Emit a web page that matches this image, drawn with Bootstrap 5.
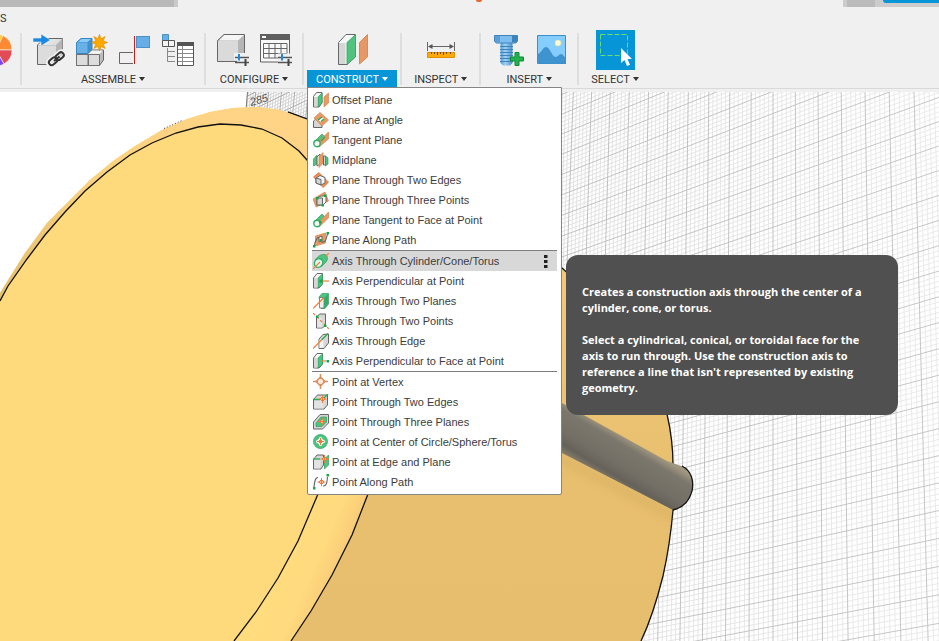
<!DOCTYPE html>
<html lang="en">
<head>
<meta charset="utf-8">
<meta name="viewport" content="width=device-width, initial-scale=1">
<title>Construct menu</title>
<link href="https://cdn.jsdelivr.net/npm/bootstrap@5.3.0/dist/css/bootstrap.min.css" rel="stylesheet">
<style>
body { font-family: Roboto, "Liberation Sans", sans-serif; font-size: 11px; color: #333; background: #fff; }
.app-head { background: #f0f0f0; padding-bottom: 3px; }
.strip { height: 7px; }
.strip-doc { width: 178px; background: #b9b9b9; border-right: 4px solid #cacaca; }
.strip-end { width: 96px; background: #ccc; }
.strip-end .tabbit { width: 28px; height: 7px; margin-left: 4px; background: #bbb; }
.strip-end .bluebit { height: 3px; margin-left: 8px; background: #0696d7; border-radius: 0 0 0 4px; }
.logo-tip { width: 6px; height: 2px; margin-right: 64px; background: #e8662c; border-radius: 0 0 3px 3px; }
.tabs-line { height: 23px; line-height: 23px; }
.tools { border-bottom: 1px solid #d9d9d9; }
.tgroup { padding: 0 3px; }
.tgroup-cut { width: 20px; }
.icons-line { height: 40px; padding: 0 2px; }
.tool { width: 43px; height: 40px; padding: 0; border: 0; background: none; display: flex; align-items: center; justify-content: center; }
.tool svg { display: block; }
.tool-on { background: #0696d7; width: 39px; outline: 0; }
.tsep { width: 2px; height: 52px; margin-top: 3px; background: #dedede; }
.tlabel { display: block; height: 18px; padding: 1px 9px 0; border: 0; background: none; line-height: 17px; color: #333; white-space: nowrap; }
.tlabel.dropdown-toggle::after { border-top: 4px solid; border-left: 3px solid transparent; border-right: 3px solid transparent; margin-left: 3px; vertical-align: 2px; }
.tlabel-on { background: #0696d7; color: #fff; }
.cmenu { top: 57px; left: 3px; width: 255px; padding: 2px 4px; border: 1px solid #858585; border-radius: 0 0 2px 2px; margin: 0; font-size: 11px; }
.cmenu .dropdown-item { display: flex; align-items: center; height: 20px; padding: 0 9px 0 1px; line-height: 20px; color: #3c3c3c; font-family: "Liberation Sans", Arial, sans-serif; }
.cmenu svg { flex: none; margin-right: 3px; }
.cmenu .picked { background: #d8d8d8; }
.cmenu .dropdown-divider { margin: 0; border-top: 1px solid #7d7d7d; opacity: 1; }
.tipbox { top: 4px; left: 254px; width: 332px; padding: 29px 16px 19px; border-radius: 12px; background: #505050; color: #fff; font: 700 11px/16px "Open Sans", "Noto Sans", sans-serif; z-index: 5; }
.tipbox p { margin-bottom: 16px; }
.tipbox p:last-child { margin-bottom: 0; }
.scene { min-height: 0; }
/* icon paints */
.g { fill: #4dc47f; stroke: #2e9d5d; stroke-width: .7; }
.o { fill: #e69a66; stroke: #d9824a; stroke-width: .7; }
.c { fill: #d6d6d6; stroke: #666; stroke-width: 1; }
.w { fill: #f6f6f6; stroke: #666; stroke-width: 1; }
.lg { fill: none; stroke: #1fae57; stroke-width: 1.3; }
.lo { fill: none; stroke: #ec7f3a; stroke-width: 1.2; }
.lk { fill: none; stroke: #666; stroke-width: 1.1; }
.dg { fill: #14a84b; }
</style>
<script src="https://cdn.jsdelivr.net/npm/bootstrap@5.3.0/dist/js/bootstrap.bundle.min.js"></script>
</head>
<body class="vh-100 d-flex flex-column overflow-hidden">
<header class="app-head position-relative z-2">
  <div class="strip d-flex justify-content-between">
    <div class="strip-doc"></div>
    <div class="logo-tip"></div>
    <div class="strip-end d-flex"><div class="tabbit"></div><div class="bluebit flex-grow-1"></div></div>
  </div>
  <div class="tabs-line">S</div>
  <div class="tools d-flex align-items-start">
    <div class="tgroup-cut">
      <button class="tool w-100 justify-content-start" aria-label="Appearance">
        <svg width="13" height="34" viewBox="0 33 13 34"><g stroke="#fff" stroke-width=".6"><path d="M-4 50L-4 34A16 16 0 0 1 4 36z" fill="#ffcc40"/><path d="M-4 50L3 35.500A16 16 0 0 1 12 50z" fill="#ff8a33"/><path d="M-4 50H12A16 16 0 0 1 4 64z" fill="#e24a55"/><path d="M-4 50L4 64A16 16 0 0 1-4 66z" fill="#7b44f0"/></g></svg>
      </button>
    </div>
    <div class="tsep"></div>
    <div class="tgroup d-flex flex-column align-items-center">
      <div class="icons-line d-flex">
        <button class="tool" aria-label="Insert component"><svg width="33" height="34" viewBox="33 33 33 34"><defs><linearGradient id="cb" x1="0" x2="1" y1="0" y2="1"><stop stop-color="#f4f4f4"/><stop offset="1" stop-color="#c4c4c4"/></linearGradient></defs><path d="M38.500 45L45 38.500H63.500V57L57 64.500H38.500z" fill="url(#cb)" stroke="#666"/><path d="M38.500 45H57L63.500 38.500V57L57 64.500z" fill="#b4b4b4"/><path d="M39 45.500H57V64H39z" fill="#dcdcdc"/><path d="M34 38H42V34L51.500 40L42 46V42H34z" fill="#1a8be0" stroke="#f4f4f4" stroke-width=".6"/><g fill="none"><g stroke="#f0f0f0" stroke-width="5"><rect x="49" y="58.500" width="10" height="6" rx="3" transform="rotate(-40 54 61.500)"/><rect x="56" y="53" width="10" height="6" rx="3" transform="rotate(-40 61 56)"/></g><g stroke="#333" stroke-width="2"><rect x="49.500" y="58.500" width="9" height="5.500" rx="2.800" transform="rotate(-40 54 61.200)"/><rect x="56" y="53.500" width="9" height="5.500" rx="2.800" transform="rotate(-40 60.500 56)"/><path d="M55 61L60.500 56.500"/></g></g></svg></button>
        <button class="tool" aria-label="New component"><svg width="33" height="34" viewBox="76 33 33 34"><path d="M77.500 54L82 50H104.500V60L100.500 65.500H77.500z" fill="#bcbcbc" stroke="#666"/><path d="M77.500 54.500H89V65.500H77.500zM89.500 54.500H100.500V65.500H89.500z" fill="#dcdcdc" stroke="#707070"/><path d="M89.500 54L93 50.500H104L100.500 54z" fill="#f3f3f3"/><path d="M77.500 42.500L82 38.500H93V49L89 53.500H77.500z" fill="#3f92cf" stroke="#3786c0"/><path d="M78 42.500H88.500V53H78z" fill="#68b0e6"/><path d="M79 42L82.500 39H92L88.500 42z" fill="#8acdfc"/><path d="M100.500 34.500l1.600 4.300 4-2.200-2 4.200 4.400 1.700-4.400 1.700 2 4.200-4-2-1.600 4.300-1.600-4.300-4 2 2-4.200-4.400-1.700 4.400-1.700-2-4.200 4 2.200z" fill="#ffa800" stroke="#e28c00" stroke-width=".7"/></svg></button>
        <button class="tool" aria-label="Joint"><svg width="33" height="34" viewBox="119 33 33 34"><path d="M134 52.500H120.500V63.500H134" fill="none" stroke="#666"/><path d="M135.500 36V64" stroke="#c81e1e"/><rect x="137.500" y="36.500" width="13" height="11" fill="#66aee5" stroke="#4a93c9"/></svg></button>
        <button class="tool" aria-label="As-built joint"><svg width="33" height="34" viewBox="162 33 33 34"><path d="M163.500 34.500h6v6h-6z" fill="#66aee5" stroke="#4a93c9"/><path d="M163.500 40.500h6v6h-6zM169.500 40.500h6v6h-6z" fill="#f6f6f6" stroke="#555"/><path d="M168.500 48V61.500H176M168.500 51.500H176M168.500 56.500H176" fill="none" stroke="#888"/><path d="M178.500 42.500H194.500V65.500H178.500z" fill="#fff" stroke="#555"/><path d="M178 42H195V46H178z" fill="#555"/><path d="M179 49.500H194M179 53.500H194M179 57.500H194M179 61.500H194M183.500 46V65" stroke="#8a8a8a"/></svg></button>
      </div>
      <button class="tlabel dropdown-toggle">ASSEMBLE</button>
    </div>
    <div class="tsep"></div>
    <div class="tgroup d-flex flex-column align-items-center">
      <div class="icons-line d-flex">
        <button class="tool" aria-label="Configure design"><svg width="33" height="34" viewBox="216 33 33 34"><path d="M217.500 40.500L224 34.500H244.500V55L238 61.500H217.500z" fill="#b6b6b6" stroke="#666"/><path d="M218 41H238V61H218z" fill="#dadada"/><path d="M219 40.500L224.500 35H244L238 40.500z" fill="#f5f5f5"/><path d="M234 53H249V67H237V60H234z" fill="#f0f0f0"/><path d="M235 57.500H249M235 62.500H249" stroke="#555" stroke-width="1.500"/><path d="M245.500 59V66" stroke="#444" stroke-width="2"/><path d="M239 54V60.500" stroke="#1a8be0" stroke-width="2"/></svg></button>
        <button class="tool" aria-label="Configuration table"><svg width="33" height="34" viewBox="259 33 33 34"><path d="M260.500 34.500H289.500V62H260.500z" fill="#f8f8f8" stroke="#5f5f5f"/><path d="M260 34H290V40H260z" fill="#5f5f5f"/><path d="M262 36h4v2h-4z" fill="#fff"/><path d="M263.500 43.500H287V58H263.500zM263.500 48.500H287M263.500 53.500H287M269 43.500V58M275 43.500V58M281 43.500V58" fill="none" stroke="#666"/><path d="M278 53.500H292V67H278z" fill="#f0f0f0"/><path d="M278 57.500H292M278 62.500H292" stroke="#555" stroke-width="1.500"/><path d="M288.500 59V66" stroke="#444" stroke-width="2"/><path d="M282 54V60.500" stroke="#1a8be0" stroke-width="2"/></svg></button>
      </div>
      <button class="tlabel dropdown-toggle">CONFIGURE</button>
    </div>
    <div class="tsep"></div>
    <div class="tgroup d-flex flex-column align-items-center position-relative">
      <div class="icons-line d-flex">
        <button class="tool" aria-label="Offset plane"><svg width="33" height="34" viewBox="336 33 33 34"><path d="M338.500 42.500L346 34.500H355V57L347 64.500H338.500z" fill="#f7f7f7" stroke="#666"/><path d="M339 43H345.500V64H339z" fill="#d6d6d6"/><path d="M347 42.500L355.500 34.500V57L347 64.500z" fill="#50c47f" stroke="#2fa562" stroke-width=".8"/><path d="M359.500 42.500L367.500 34.500V57L359.500 64z" fill="#e69964" stroke="#d98a55"/></svg></button>
      </div>
      <button class="tlabel tlabel-on dropdown-toggle" aria-expanded="true">CONSTRUCT</button>
      <ul class="dropdown-menu show cmenu">
        <li><a class="dropdown-item" href="#"><svg width="16" height="16"><path class="w" d="M.500 4.500L3.500.500H9V11L6 15H.500z"/><path d="M1 5H4V14.500H1z" fill="#d6d6d6"/><path class="g" d="M5 5L9 1V11L5 15z"/><path class="o" d="M11 5L15.500 1V11L11 15z"/></svg>Offset Plane</a></li>
        <li><a class="dropdown-item" href="#"><svg width="16" height="16"><path class="c" d="M.500 9L4 6L9 12V15.500H.500z"/><path class="o" d="M1 6L7 .500L15.500 8L9 14z"/><path d="M5.500 8.500L8.500 5.500L11 6L8 10z" fill="#fff"/><path class="lg" d="M5 8L9 5M8 9.500L11 7"/></svg>Plane at Angle</a></li>
        <li><a class="dropdown-item" href="#"><svg width="16" height="16"><path class="g" d="M1 10L9 2L12 5L7 13z"/><path class="o" d="M6 9L15.500 0V7L6 15z"/><circle cx="4" cy="11.500" r="3.200" fill="#f4f4f4" stroke="#2fae62" stroke-width="1.400"/><path class="lg" d="M8 9L12 5"/></svg>Tangent Plane</a></li>
        <li><a class="dropdown-item" href="#"><svg width="16" height="16"><path class="g" d="M.500 14V7L4 3V12z"/><path class="w" d="M4 5L7 2V12L4 14z"/><path class="o" d="M6 5L10 .500V11L6 15.500z"/><path class="c" d="M10.500 4H12.500V13H10.500z"/><path class="g" d="M12.500 4L15 6V12L12.500 14z"/></svg>Midplane</a></li>
        <li><a class="dropdown-item" href="#"><svg width="16" height="16"><path class="o" d="M.500 5L6 .500L15.500 10L10 15.500z"/><path class="w" d="M3 6L7 3.500L12 5.500V11L8 13L3 11z"/><path class="c" d="M3 6L8 7.500V13L3 11z"/><path class="lo" d="M1 5L6 1M10 15L15 10"/></svg>Plane Through Two Edges</a></li>
        <li><a class="dropdown-item" href="#"><svg width="16" height="16"><path class="o" d="M0 7L12 0L15.500 9L3 15z"/><path class="w" d="M4 6L8 4H13V10L10 13H4z"/><path class="c" d="M4 6H9.500V13H4z"/><path class="dg" d="M3 5h2.500v2.500H3zM11 2.500h2.500V5H11zM8.500 12H11v2.500H8.500z"/></svg>Plane Through Three Points</a></li>
        <li><a class="dropdown-item" href="#"><svg width="16" height="16"><path class="g" d="M1 10L9 2L12 5L7 13z"/><path class="o" d="M7 9L15.500 0V6L7 14z"/><circle cx="4" cy="11.500" r="3.200" fill="#f4f4f4" stroke="#2fae62" stroke-width="1.400"/><path class="dg" d="M6 9h2.500v2.500H6z"/></svg>Plane Tangent to Face at Point</a></li>
        <li><a class="dropdown-item" href="#"><svg width="16" height="16"><path class="o" d="M2.500 4L12.500 1V11L2.500 14z"/><path d="M1 15C2 8 5 4 7 6C9 9 8 12 12 9C14 7 13 5 15 1" class="lk"/><path class="w" d="M6 5L9 4V9L6 10z"/><path class="dg" d="M0 13h2.500v2.500H0zM13.500 0H16v2.500h-2.500zM6.500 7H9v2.500H6.500z"/></svg>Plane Along Path</a></li>
        <li><hr class="dropdown-divider"></li>
        <li class="position-relative"><a class="dropdown-item picked" href="#" aria-describedby="axis-tip"><svg width="16" height="16"><path class="g" d="M2 7C5 3 8 1 12 1.500C15 2 15 7 13 9L8 14z"/><ellipse cx="5.500" cy="10" rx="4" ry="4.500" fill="#e8f7ee" stroke="#2fae62" stroke-width="1.300" transform="rotate(40 5.500 10)"/><path class="lo" d="M0 16L7 9M12.500 3.500L16 0"/></svg><span class="flex-grow-1">Axis Through Cylinder/Cone/Torus</span><svg class="me-0" width="5" height="14" viewBox="0 0 5 14"><path d="M1 1h3.500v3H1zM1 6h3.500v3H1zM1 11h3.500v3H1z" fill="#222"/></svg></a>
          <div class="tipbox position-absolute text-start" id="axis-tip" role="tooltip">
            <p>Creates a construction axis through the center of a cylinder, cone, or torus.</p>
            <p>Select a cylindrical, conical, or toroidal face for the axis to run through. Use the construction axis to reference a line that isn't represented by existing geometry.</p>
          </div>
        </li>
        <li><a class="dropdown-item" href="#"><svg width="16" height="16"><path class="w" d="M.500 5L4 .500H9.500V11L6 15H.500z"/><path class="g" d="M5 5L9.500 1V11L5 15z"/><path d="M1 5H4V14.500H1z" fill="#d6d6d6"/><path class="lo" d="M9 8H16"/><path class="dg" d="M6.500 6.500H9.500v3H6.500z"/></svg>Axis Perpendicular at Point</a></li>
        <li><a class="dropdown-item" href="#"><svg width="16" height="16"><path class="g" d="M6 4L9 .500H15.500V11L12 15.500H8z"/><path d="M6.500 4.500H11V15H6.500z" fill="#eee" stroke="#666" stroke-width=".7"/><path d="M11.500 4.500L15 1V11L11.500 15z" fill="#35ab67"/><path class="lo" d="M0 15.500L11 4.500"/></svg>Axis Through Two Planes</a></li>
        <li><a class="dropdown-item" href="#"><svg width="16" height="16"><path class="c" d="M3.500 4.500L6.500 1H12.500V12L9.500 15H3.500z"/><path d="M4 5H9V14.500H4z" fill="#e4e4e4"/><path class="lo" d="M0 0L16 16" stroke-dasharray="3 2"/><path class="dg" d="M3 2.500h2.500V5H3zM11 11.500h2.500V14H11z"/></svg>Axis Through Two Points</a></li>
        <li><a class="dropdown-item" href="#"><svg width="16" height="16"><path class="c" d="M6 6L10 1.500L15.500 1V10L11 15.500H6z"/><path d="M6.500 6.500H10.500V15H6.500z" fill="#f2f2f2"/><path class="lo" d="M0 15.500L10 5.500"/><path class="lg" d="M9 6.500L15 .500"/></svg>Axis Through Edge</a></li>
        <li><a class="dropdown-item" href="#"><svg width="16" height="16"><path class="w" d="M.500 5L4 .500H9.500V11L6 15H.500z"/><path class="g" d="M5 5L9.500 1V11L5 15z"/><path d="M1 5H4V14.500H1z" fill="#d6d6d6"/><path class="lo" d="M8 8H13"/><path class="dg" d="M13.500 7H16v2.500h-2.500z"/></svg>Axis Perpendicular to Face at Point</a></li>
        <li><hr class="dropdown-divider"></li>
        <li><a class="dropdown-item" href="#"><svg width="16" height="16"><path d="M7.500 3L12 7.500L7.500 12L3 7.500z" fill="#fbe9dc" stroke="#d9905c" stroke-width="1.500"/><path d="M7.500 0V5M7.500 10V15M0 7.500H5M10 7.500H15" stroke="#d9905c" stroke-width="1.500"/></svg>Point at Vertex</a></li>
        <li><a class="dropdown-item" href="#"><svg width="16" height="16"><path class="c" d="M.500 5.500L4.500 1H14.500V11L11 15H.500z"/><path d="M1 6H10.500V14.500H1z" fill="#e2e2e2"/><path class="lg" d="M0 5.500H7M11 4L15 0"/><path d="M9.500 2.500L12 5L9.500 7.500L7 5zM9.500 1V9M5.500 5H13.500" fill="#fff" stroke="#ea7a34" stroke-width="1"/></svg>Point Through Two Edges</a></li>
        <li><a class="dropdown-item" href="#"><svg width="16" height="16"><path class="c" d="M.500 8L7 .500H15.500V9L9.500 15H.500z"/><path class="g" d="M3 9L8 3H13.500V8L9 12.500H3z"/><path d="M9 5L11.500 7.500L9 10L6.500 7.500zM9 3.500V11.500M5 7.500H13" fill="#fff" stroke="#ea7a34" stroke-width="1"/></svg>Point Through Three Planes</a></li>
        <li><a class="dropdown-item" href="#"><svg width="16" height="16"><circle class="g" cx="7.500" cy="7.500" r="7"/><path d="M7.500 4.500L10.500 7.500L7.500 10.500L4.500 7.500zM7.500 3V12M3 7.500H12" fill="#ea7a34" stroke="#fff" stroke-width="2"/><path d="M7.500 5.500L9.500 7.500L7.500 9.500L5.500 7.500zM7.500 4V11M4 7.500H11" fill="#fff" stroke="#ea7a34" stroke-width="1"/></svg>Point at Center of Circle/Sphere/Torus</a></li>
        <li><a class="dropdown-item" href="#"><svg width="16" height="16"><path class="c" d="M.500 5.500L4 1H10.500V11L8 15H.500z"/><path d="M1 6H7V14.500H1z" fill="#e2e2e2"/><path class="g" d="M11.500 5L15.500 1V11L11.500 15z"/><path class="lg" d="M0 5H7"/><path d="M11.500 2.500L14 5L11.500 7.500L9 5zM11.500 1V9M7.500 5H15.500" fill="#fff" stroke="#ea7a34" stroke-width="1"/></svg>Point at Edge and Plane</a></li>
        <li><a class="dropdown-item" href="#"><svg width="16" height="16"><path class="lk" d="M1 13C1.500 8 2 3.500 5 3.500M10 12C14 12 14 8 14.500 3"/><path class="dg" d="M0 13h2.500v2.500H0zM13.500 0H16v2.500h-2.500z"/><path d="M8.500 5.500L11 8L8.500 10.500L6 8zM8.500 4V12M4.500 8H12.500" fill="#fff" stroke="#ea7a34" stroke-width="1"/></svg>Point Along Path</a></li>
      </ul>
    </div>
    <div class="tsep"></div>
    <div class="tgroup d-flex flex-column align-items-center">
      <div class="icons-line d-flex">
        <button class="tool" aria-label="Measure"><svg width="33" height="34" viewBox="425 33 33 34"><path d="M428.500 42V51M455.500 42V51M430 46.500H454" stroke="#666"/><path d="M429 46.500L433.500 44V49zM455 46.500L450.500 44V49z" fill="#555"/><path d="M428.500 52.500H455.500V57.500H428.500z" fill="#ffa90a" stroke="#e08f00"/><path d="M432.500 52v2M435.500 52v2M438.500 52v3M441.500 52v2M444.500 52v3M447.500 52v2M451.500 52v2" stroke="#6b4a00"/></svg></button>
      </div>
      <button class="tlabel dropdown-toggle">INSPECT</button>
    </div>
    <div class="tsep"></div>
    <div class="tgroup d-flex flex-column align-items-center">
      <div class="icons-line d-flex">
        <button class="tool" aria-label="Insert fastener"><svg width="33" height="34" viewBox="492 33 33 34"><defs><linearGradient id="bt"><stop stop-color="#5b9fd6"/><stop offset=".4" stop-color="#9ed0f5"/><stop offset="1" stop-color="#4d90c8"/></linearGradient></defs><path d="M501.500 43H513.500V63L511 65.500H504L501.500 63z" fill="url(#bt)"/><path d="M501 46.500H514M501 49.500H514M501 52.500H514M501 55.500H514M501 58.500H514M501 61.500H514" stroke="#3f83bb"/><path d="M495.500 35.500H518.500V41L517 43H497L495.500 41z" fill="#7dbdf0" stroke="#3f83bb"/><path d="M513 36H518V41L517 42.500H513z" fill="#3f83bb"/><path d="M496 36H501V42.500H497L496 41z" fill="#5b9fd6"/><path d="M516 52.500h4V57h4.500v4H520v4.500h-4V61h-4.500v-4H516z" fill="#22b14c" stroke="#14893a"/></svg></button>
        <button class="tool" aria-label="Insert canvas"><svg width="33" height="34" viewBox="534 33 33 34"><path d="M537.500 35.500H565.500V63.500H537.500z" fill="#85ccff"/><path d="M538 54C542 52 543 47 546 47C550 47 552 57 555.500 57C558 57 559 54 561 54C563 54 564 57 566 58V64H538z" fill="#3f93cf"/><circle cx="558" cy="43" r="3" fill="#fbf9d0" stroke="#e5e3a8" stroke-width=".6"/><path d="M537.500 35.500H565.500V63.500H537.500z" fill="none" stroke="#3d8fcd"/></svg></button>
      </div>
      <button class="tlabel dropdown-toggle">INSERT</button>
    </div>
    <div class="tsep"></div>
    <div class="tgroup d-flex flex-column align-items-center">
      <div class="icons-line d-flex">
        <button class="tool tool-on" aria-label="Select"><svg width="33" height="34" viewBox="599 33 33 34"><path d="M600.500 34.500H627.500V55.500H600.500z" fill="none" stroke="#6bdc72" stroke-dasharray="5 2"/><path d="M621 48V63L624.500 60L627 66L630 64.700L627.500 59H632z" fill="#fff"/></svg></button>
      </div>
      <button class="tlabel dropdown-toggle">SELECT</button>
    </div>
  </div>
</header>
<main class="scene flex-grow-1">
  <svg class="d-block w-100 h-100" viewBox="0 92 939 549" preserveAspectRatio="xMinYMin slice" role="img" aria-label="Model viewport">
    <defs>
      <clipPath id="floor"><path d="M247 92L245 118L300 300L640 641H1400V92z"/></clipPath>
      <linearGradient id="thin" gradientUnits="userSpaceOnUse" x1="250" y1="0" x2="900" y2="0"><stop stop-color="#d2d2d2"/><stop offset=".5" stop-color="#e2e2e2"/><stop offset="1" stop-color="#eaeaea"/></linearGradient>
      <linearGradient id="thick" gradientUnits="userSpaceOnUse" x1="250" y1="0" x2="900" y2="0"><stop stop-color="#a8a8a8"/><stop offset=".5" stop-color="#c0c0c0"/><stop offset="1" stop-color="#c6c6c6"/></linearGradient>
      <linearGradient id="disc" x1="0" y1="0" x2="0" y2="1"><stop stop-color="#ffd88a"/><stop offset=".3" stop-color="#f2c97a"/><stop offset=".7" stop-color="#e8bf6e"/><stop offset="1" stop-color="#e7be6d"/></linearGradient>
      <linearGradient id="fillet" gradientUnits="userSpaceOnUse" x1="286" y1="560" x2="338" y2="583"><stop stop-color="#ffdc7e"/><stop offset=".5" stop-color="#ffda7e"/><stop offset=".8" stop-color="#fbcf7a"/><stop offset="1" stop-color="#ecc172"/></linearGradient>
      <linearGradient id="rim" gradientUnits="userSpaceOnUse" x1="0" y1="290" x2="300" y2="110"><stop stop-color="#e3bf70"/><stop offset=".4" stop-color="#fbd27f"/><stop offset="1" stop-color="#ffd488"/></linearGradient>
      <linearGradient id="shaft" gradientUnits="userSpaceOnUse" x1="622" y1="435" x2="599" y2="474"><stop stop-color="#a09780"/><stop offset=".18" stop-color="#7c776c"/><stop offset=".6" stop-color="#746f66"/><stop offset=".85" stop-color="#66625a"/><stop offset="1" stop-color="#827a68"/></linearGradient>
      <filter id="soft"><feGaussianBlur stdDeviation="4"/></filter>
      <clipPath id="discclip"><path id="dshape" d="M257 107L280 110L307 119C420 155 500 210 562 268C620 320 655 370 667 414Q673 440 673 465V510Q670 545 663 576C657 600 651 620 641 641H200z"/></clipPath>
    </defs>
    <g clip-path="url(#floor)" fill="none">
      <path id="minor" stroke="url(#thin)"/>
      <path id="major" stroke="url(#thick)"/>
    </g>
    <path d="M247.500 92L246 110" stroke="#777"/>
    <text x="251" y="106" font-size="11" font-family="Liberation Sans, sans-serif" font-style="italic" fill="#555" transform="rotate(-16 251 106)">285</text>
    <use href="#dshape" fill="url(#disc)"/>
    <path d="M288 112L307 119C420 155 500 210 562 268C620 320 655 370 667 414Q673 440 673 465V510Q670 545 663 576C657 600 651 620 641 641" fill="none" stroke="#111" stroke-width="1.300"/>
    <path clip-path="url(#discclip)" d="M540 448L673 516L690 520" fill="none" stroke="#b18f4c" stroke-width="8" opacity=".22" filter="url(#soft)"/>
    <path d="M562 403L667 461L684 467C692 472 694 482 692 491C689 502 682 508 673 510L562 453z" fill="url(#shaft)"/>
    <path d="M682 466C692 471 694 482 692 491C689 502 682 508 673 510" fill="none" stroke="#111" stroke-width="1.300"/>
    <path d="M0 293L25 253L47 223L70 200L90 180L113 161L135 146L162 130L187 119L210 112L233 108L257 107L280 110L307 119C390 160 430 330 368 494L352 535L332 575L311 611L291 641H0z" fill="url(#fillet)"/>
    <path d="M0 293L25 253L47 223L70 200L90 180L113 161L135 146L162 130L187 119L210 112L233 108L257 107L280 110L307 119V162L220 124L100 200L0 320z" fill="url(#rim)"/>
    <path d="M288 112L307 119" stroke="#111" stroke-width="1.300"/>
    <path d="M368 494L352 535L332 575L311 611L291 641" fill="none" stroke="#111" stroke-width="1.300"/>
    <path d="M0 301L8 286L27 259L45 235L65 212L85 191L107 172L130 155L152 143L176 133L198 127L220 124L241 125L262 129L282 138L299 151L307 160C370 230 370 370 318 494L298 541L278 578L256 612L234 641H0z" fill="#ffda7c"/>
    <path d="M0 301L8 286L27 259L45 235L65 212L85 191L107 172L130 155L152 143L176 133L198 127L220 124L241 125L262 129L282 138L299 151L307 160C370 230 370 370 318 494L298 541L278 578L256 612L234 641" fill="none" stroke="#111" stroke-width="1.300"/>
    <path d="M164 128.500L182 120.500" stroke="#333" stroke-dasharray="1 2" fill="none"/>
  </svg>
</main>
<script>
// Ground grid in perspective: two line families, each major cell split in five.
const out = { minor: '', major: '' };
const DIV = 5;
for (let n = -45 * DIV; n <= 24 * DIV; n++) {
  const k = n / DIV, off = 22.04 * k / (1 - 0.01036 * k);
  const at = y => (773 + off * (1 + 0.0001825 * (y - 92))).toFixed(1);
  out[n % DIV ? 'minor' : 'major'] += `M${at(92)} 92L${at(641)} 641`;
}
for (let n = -24 * DIV; n <= 36 * DIV; n++) {
  const j = n / DIV, mid = 61 + 21.45 * j / (1 - 0.00414 * j), slope = (mid - 1126) / 2597;
  const at = x => (mid + slope * (x - 740)).toFixed(1);
  out[n % DIV ? 'minor' : 'major'] += `M240 ${at(240)}L1400 ${at(1400)}`;
}
document.getElementById('minor').setAttribute('d', out.minor);
document.getElementById('major').setAttribute('d', out.major);
</script>
</body>
</html>
